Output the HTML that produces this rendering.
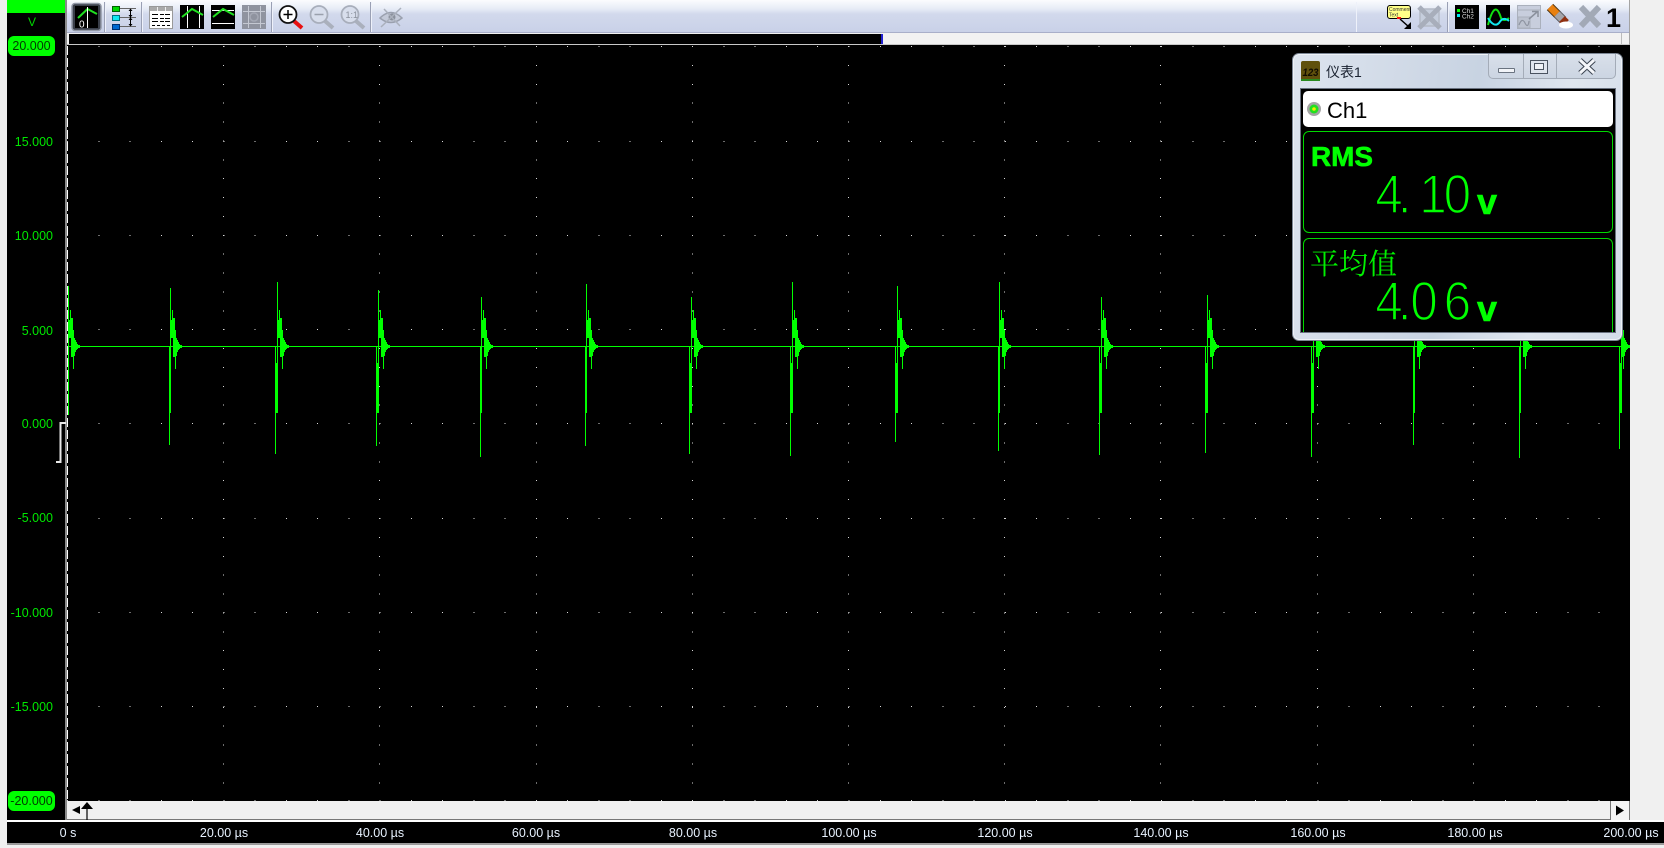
<!DOCTYPE html>
<html lang="zh">
<head>
<meta charset="utf-8">
<title>Scope</title>
<style>
html,body{margin:0;padding:0;background:#f0f0f0}
#p{position:relative;width:1664px;height:848px;overflow:hidden;background:#f0f0f0;font-family:"Liberation Sans","Noto Sans CJK SC",sans-serif}
#p div{position:absolute;box-sizing:border-box}
.yl{left:7px;width:46px;text-align:right;font-size:12.5px;line-height:16px;height:16px;color:#00e800}
.pill{left:8px;width:47px;height:20px;background:#00ff00;border-radius:6px;color:#003a00;font-size:12.5px;line-height:20px;text-align:center}
.tl{width:100px;text-align:center;font-size:12.5px;line-height:16px;height:16px;top:825px;color:#e8f2ff}
svg{position:absolute;left:0;top:0}
</style>
</head>
<body>
<div id="p">
<!-- left axis column -->
<div style="left:7px;top:0;width:58px;height:820px;background:#000"></div>
<div style="left:7px;top:0;width:58px;height:13px;background:#00ff00"></div>
<div style="left:7px;top:15px;width:50px;text-align:center;color:#00d800;font-size:12px;line-height:14px">V</div>
<div style="left:65px;top:0;width:2px;height:821px;background:#8a8a8a"></div>
<!-- plot -->
<div style="left:67px;top:44px;width:1563px;height:757px;background:#000;border-top:1px solid #c8c8c8"></div>
<!-- toolbar -->
<div style="left:67px;top:0;width:1563px;height:33px;background:linear-gradient(#fbfcfe 0,#e6ebf6 9px,#d2d9ec 14px,#c9d1e8 100%);border-bottom:1px solid #a9afc9"></div>
<div style="left:67px;top:33px;width:1563px;height:11px;background:#f2f2f2"></div>
<div style="left:69px;top:34px;width:814px;height:10px;background:#000;border-right:2px solid #2020d0"></div>
<div style="left:1621px;top:33px;width:1px;height:11px;background:#bbb"></div>
<div style="left:1629px;top:0;width:1px;height:45px;background:#a4a4a4"></div>
<!-- scrollbar -->
<div style="left:67px;top:801px;width:1563px;height:19px;background:#f0f0f0;border-bottom:1px solid #777"></div>
<div style="left:1610px;top:801px;width:20px;height:19px;background:#f4f4f4;border-left:1px solid #777;border-right:1px solid #777"></div>
<!-- bottom axis -->
<div style="left:7px;top:820px;width:1657px;height:2px;background:#fff"></div>
<div style="left:7px;top:822px;width:1657px;height:21px;background:#000"></div>
<div style="left:7px;top:843px;width:1657px;height:2px;background:#9a9a9a"></div>

<div class="pill" style="top:36px">20.000</div>
<div class="yl" style="top:134px">15.000</div>
<div class="yl" style="top:228px">10.000</div>
<div class="yl" style="top:323px">5.000</div>
<div class="yl" style="top:416px">0.000</div>
<div class="yl" style="top:510px">-5.000</div>
<div class="yl" style="top:605px">-10.000</div>
<div class="yl" style="top:699px">-15.000</div>
<div class="pill" style="top:791px">-20.000</div>

<div class="tl" style="left:18px">0 s</div>
<div class="tl" style="left:174px">20.00 µs</div>
<div class="tl" style="left:330px">40.00 µs</div>
<div class="tl" style="left:486px">60.00 µs</div>
<div class="tl" style="left:643px">80.00 µs</div>
<div class="tl" style="left:799px">100.00 µs</div>
<div class="tl" style="left:955px">120.00 µs</div>
<div class="tl" style="left:1111px">140.00 µs</div>
<div class="tl" style="left:1268px">160.00 µs</div>
<div class="tl" style="left:1425px">180.00 µs</div>
<div class="tl" style="left:1581px">200.00 µs</div>

<svg width="1664" height="848" viewBox="0 0 1664 848">
<defs>
<path id="r" d="M1 320h1v18h-1zM2 310h1v28h-1zM3 318h2v39h-2zM5 330h1v39h-1zM6 338h1v18h-1zM7 340h1v12h-1zM8 342h1v8h-1zM9 344h1v5h-1zM10 345h2v3h-2z" fill="#00ff00"/>
</defs>
<!-- grid dots -->
<g stroke="#d8d8d8" stroke-width="1" shape-rendering="crispEdges" fill="none">
<g stroke-dasharray="1 30.26">
<path d="M67 46.5H1630"/><path d="M67 141.5H1630"/><path d="M67 235.5H1630"/><path d="M67 329.5H1630"/><path d="M67 423.5H1630"/><path d="M67 518.5H1630"/><path d="M67 612.5H1630"/><path d="M67 706.5H1630"/><path d="M67 800.5H1630"/>
</g>
<g stroke-dasharray="1 17.88">
<path d="M223.5 46V801"/><path d="M379.5 46V801"/><path d="M536.5 46V801"/><path d="M692.5 46V801"/><path d="M848.5 46V801"/><path d="M1004.5 46V801"/><path d="M1160.5 46V801"/><path d="M1317.5 46V801"/><path d="M1473.5 46V801"/>
</g>
</g>
<!-- dashed cursor line -->
<path d="M67.5 46V801" stroke="#fff" stroke-dasharray="9 3" fill="none" shape-rendering="crispEdges"/>
<!-- trace -->
<g shape-rendering="crispEdges">
<path d="M68 346.5H1630" stroke="#00ff00" stroke-width="1" fill="none"/>
<path fill="none" stroke="#00ff00" stroke-width="1" d="M68.5 286V415M170.5 288V413M169.5 346V445M277.5 282V413M276.5 363V413M275.5 346V454M378.5 290V413M377.5 363V413M376.5 346V446M481.5 297V413M480.5 346V457M586.5 284V413M585.5 346V446M691.5 297V413M690.5 363V413M689.5 346V454M792.5 282V413M791.5 363V413M790.5 346V456M897.5 286V413M896.5 363V413M895.5 346V442M999.5 282V413M998.5 346V451M1101.5 297V413M1100.5 363V413M1099.5 346V455M1207.5 295V413M1206.5 363V413M1205.5 346V453M1313.5 295V413M1312.5 363V413M1311.5 346V457M1414.5 290V413M1413.5 346V445M1520.5 290V413M1519.5 346V458M1621.5 290V413M1620.5 363V413M1619.5 346V449"/>
<use href="#r" x="68"/><use href="#r" x="170"/><use href="#r" x="277"/><use href="#r" x="378"/><use href="#r" x="481"/><use href="#r" x="586"/><use href="#r" x="691"/><use href="#r" x="792"/><use href="#r" x="897"/><use href="#r" x="999"/><use href="#r" x="1101"/><use href="#r" x="1207"/><use href="#r" x="1313"/><use href="#r" x="1414"/><use href="#r" x="1520"/><use href="#r" x="1618"/>
</g>
<!-- ground bracket -->
<path d="M66 423H60.500V462H56" stroke="#e8e8e8" stroke-width="2" fill="none"/>
<!-- scroll arrows -->
<path d="M72 810l8-4v8z" fill="#000"/>
<path d="M87 820V806" stroke="#000" stroke-width="1.2"/>
<path d="M81 809l6-7 6 7z" fill="#000"/>
<path d="M1616 805.500l8 5-8 5z" fill="#000"/>

<!-- toolbar separators -->
<g stroke="#9aa0b4" stroke-width="1" shape-rendering="crispEdges">
<path d="M104.5 2V32M141.5 2V32M271.5 2V32M370.5 2V32M1447.5 2V32"/>
</g>
<g stroke="#eef1fa" stroke-width="1" shape-rendering="crispEdges"><path d="M105.5 2V32M142.5 2V32M272.5 2V32M371.5 2V32M1448.5 2V32M1356.5 2V32"/></g>

<!-- icon 1 -->
<rect x="72" y="3.5" width="29" height="27" rx="3" fill="#3a3f4a" stroke="#9298a6" stroke-width="1.5"/>
<rect x="75" y="6" width="23" height="22" fill="#000"/>
<path d="M78 18L87.5 9L97 14" stroke="#20e020" stroke-width="2" fill="none"/>
<path d="M87.5 7V28" stroke="#fff"/>
<text x="79" y="27.500" font-size="10" fill="#fff" font-family="Liberation Sans">0</text>
<!-- icon 2 -->
<g shape-rendering="crispEdges">
<path d="M120 8.500H136M120 17.500H136M120 26.500H136" stroke="#666"/>
<rect x="112.500" y="6.500" width="7" height="5" fill="#00d800" stroke="#006000"/>
<rect x="112.500" y="15.500" width="7" height="5" fill="#10e8f0" stroke="#007080"/>
<rect x="112.500" y="24.500" width="7" height="5" fill="#0068d0" stroke="#003070"/>
<path d="M130.500 10V25" stroke="#000"/>
</g>
<path d="M128.500 11l2-2.500 2 2.500zM128.500 15l2 2.500 2-2.500zM128.500 20l2-2.500 2 2.500zM128.500 24l2 2.500 2-2.500z" fill="#000"/>
<!-- icon 3 table -->
<g shape-rendering="crispEdges">
<rect x="149.500" y="6.500" width="23" height="22" fill="#fff" stroke="#999"/>
<rect x="150" y="7" width="22" height="4" fill="#aaa"/>
<path d="M157.500 7V11M165.500 7V11" stroke="#eee"/>
<path d="M152 14.500h6m2 0h4m1 0h5M152 18.500h6m2 0h4m1 0h5M152 21.500h6m2 0h4m1 0h5M152 25.500h3m2 0h3m2 0h3m2 0h3" stroke="#000"/>
</g>
<!-- icon 4 -->
<rect x="180" y="5" width="24" height="24" fill="#000"/>
<path d="M187.500 6V28M199.500 6V28" stroke="#fff" shape-rendering="crispEdges"/>
<path d="M182 17L192 9L203 15" stroke="#20e020" stroke-width="2" fill="none"/>
<!-- icon 5 -->
<rect x="211" y="5" width="24" height="24" fill="#000"/>
<path d="M212 10.500H234M212 23.500H234" stroke="#fff" shape-rendering="crispEdges"/>
<path d="M213 17L223 9L234 15" stroke="#20e020" stroke-width="2" fill="none"/>
<!-- icon 6 -->
<rect x="242" y="5" width="24" height="24" fill="#8f939f"/>
<path d="M248.500 6V28M260.500 6V28M243 11.500H265M243 23.500H265" stroke="#c4c8d2" shape-rendering="crispEdges"/>
<circle cx="254" cy="17" r="4" fill="none" stroke="#a4a8b4" stroke-width="1.500"/>
<!-- zoom in -->
<path d="M294 21L302 28" stroke="#e81010" stroke-width="4"/>
<circle cx="288" cy="14.500" r="8.500" fill="#fff" stroke="#111" stroke-width="1.800"/>
<path d="M283.500 14.500h9M288 10v9" stroke="#000" stroke-width="1.500"/>
<!-- zoom out -->
<path d="M325 21L333 28" stroke="#aab0bc" stroke-width="4"/>
<circle cx="319" cy="14.500" r="8.500" fill="#d8deec" stroke="#a8aebb" stroke-width="1.800"/>
<path d="M314.500 14.500h9" stroke="#9aa0ac" stroke-width="1.500"/>
<!-- zoom 1:1 -->
<path d="M356 21L364 28" stroke="#aab0bc" stroke-width="4"/>
<circle cx="350" cy="14.500" r="8.500" fill="#d8deec" stroke="#a8aebb" stroke-width="1.800"/>
<text x="345.500" y="18" font-size="9" fill="#8a909c" font-family="Liberation Sans">1:1</text>
<!-- eye -->
<path d="M380 18Q391 7 402 18Q391 27 380 18Z" fill="#c3c9d8" stroke="#9aa0ae" stroke-width="1.500"/>
<circle cx="392" cy="17" r="3.500" fill="#8a909c"/>
<path d="M381 27L401 8M384 9L400 26" stroke="#aab0bc" stroke-width="1.500" fill="none"/>

<!-- comment icon -->
<rect x="1387.500" y="5.500" width="23" height="13" rx="2.500" fill="#ffff88" stroke="#000"/>
<text x="1389" y="11" font-size="5" fill="#333" font-family="Liberation Sans">Comment</text>
<text x="1389" y="16.500" font-size="5" fill="#333" font-family="Liberation Sans">Text</text>
<rect x="1397" y="17" width="4" height="2" fill="#ff1010"/>
<path d="M1400 19L1409 27" stroke="#000" stroke-width="1.500"/>
<path d="M1411 29V22L1404 29Z" fill="#000"/>
<!-- disabled X box -->
<rect x="1420" y="9" width="19" height="17" rx="2" fill="#c6cedd" stroke="#b4bac6" stroke-width="1.500"/>
<path d="M1419 7L1440 28M1440 7L1419 28" stroke="#a8aebb" stroke-width="5"/>
<!-- Ch1/Ch2 -->
<rect x="1455" y="5" width="24" height="24" fill="#000"/>
<rect x="1457" y="9" width="3" height="3" fill="#00ff00"/>
<rect x="1457" y="14" width="3" height="3" fill="#00e8f0"/>
<text x="1462" y="13" font-size="6.500" fill="#ddd" font-family="Liberation Sans">Ch1</text>
<text x="1462" y="18.500" font-size="6.500" fill="#ddd" font-family="Liberation Sans">Ch2</text>
<!-- wave -->
<rect x="1486" y="5" width="24" height="24" fill="#000"/>
<path d="M1488 25Q1495 -2 1501 18Q1504 22 1509 18" stroke="#10e010" stroke-width="2" fill="none"/>
<path d="M1488 18Q1494 28 1499 23Q1503 16 1509 21" stroke="#10e8f0" stroke-width="2" fill="none"/>
<!-- popup disabled -->
<rect x="1517.500" y="5.500" width="23" height="23" fill="#c8cedd" stroke="#aab0bc"/>
<path d="M1518 10H1540" stroke="#aab0bc"/>
<rect x="1518" y="17" width="12" height="11" fill="#bcc2cf" stroke="#aab0bc"/>
<path d="M1519 25Q1522 17 1525 23T1529 21" stroke="#8f95a2" fill="none" stroke-width="1.200"/>
<path d="M1529 19L1537 12M1532 11.500H1538V17" stroke="#8a909c" stroke-width="1.500" fill="none"/>
<!-- eraser -->
<path d="M1550 7L1558 15" stroke="#4a3010" stroke-width="9"/>
<path d="M1550 7L1558 15" stroke="#e88010" stroke-width="7"/>
<path d="M1557 14L1563 20" stroke="#5a5a60" stroke-width="9"/>
<path d="M1557 14L1563 20" stroke="#a4a4aa" stroke-width="7"/>
<path d="M1562 19L1566 23" stroke="#903010" stroke-width="8"/>
<ellipse cx="1566" cy="25" rx="7" ry="3.500" fill="#fff"/>
<!-- big X -->
<path d="M1581 7L1599 26M1599 7L1581 26" stroke="#a2a9b6" stroke-width="6"/>
<text x="1606" y="27" font-size="27" font-weight="bold" fill="#000" font-family="Liberation Sans">1</text>
</svg>

<!-- meter panel -->
<div style="left:1292px;top:53px;width:331px;height:288px;border-radius:7px;border:1px solid #7c8694;background:linear-gradient(100deg,#dde4ee 0,#c8d3e2 50%,#dfe6ef 75%,#d3dce8 100%);box-shadow:inset 0 0 0 1px #eef2f7"></div>
<div style="left:1488px;top:54px;width:128px;height:25px;border:1px solid #a4acb8;border-top:0;border-radius:0 0 5px 5px;background:linear-gradient(#d9e0ea,#ccd5e2)"></div>
<div style="left:1523px;top:54px;width:1px;height:24px;background:#a4acb8"></div>
<div style="left:1556px;top:54px;width:1px;height:24px;background:#a4acb8"></div>
<div style="left:1498px;top:68px;width:17px;height:5px;background:#f2f4f8;border:1px solid #6a7380;border-radius:1px"></div>
<div style="left:1530px;top:60px;width:18px;height:14px;border:1px solid #4a5360;background:#dfe5ee"></div>
<div style="left:1534px;top:63px;width:10px;height:7px;border:1px solid #4a5360;background:#eef1f6"></div>
<svg width="1664" height="848" viewBox="0 0 1664 848">
<path d="M1580 60L1594 73M1594 60L1580 73" stroke="#3a4350" stroke-width="5"/>
<path d="M1580 60L1594 73M1594 60L1580 73" stroke="#f4f6fa" stroke-width="3"/>
<rect x="1301" y="61" width="19" height="20" rx="2" fill="#5f500c"/>
<rect x="1301" y="79" width="19" height="2" fill="#2a8a20"/>
<text x="1302.500" y="76" font-size="11" font-style="italic" font-weight="bold" fill="#100c00" font-family="Liberation Sans" textLength="16" lengthAdjust="spacingAndGlyphs">123</text>
</svg>
<div style="left:1326px;top:63px;font-size:14px;line-height:18px;color:#1a2230;white-space:nowrap">仪表1</div>
<div style="left:1300px;top:88px;width:316px;height:245px;background:#000;border:1px solid #6a7280;overflow:hidden">
  <div style="left:2px;top:2px;width:310px;height:36px;background:#fff;border-radius:5px"></div>
  <div style="left:2px;top:42px;width:310px;height:102px;border:1px solid #00d800;border-radius:6px"></div>
  <div style="left:2px;top:149px;width:310px;height:120px;border:1px solid #00d800;border-radius:6px"></div>
</div>
<svg width="1664" height="848" viewBox="0 0 1664 848">
<circle cx="1314" cy="109" r="7" fill="#a4a4a4"/>
<circle cx="1314" cy="109" r="4.500" fill="#20e020"/>
<circle cx="1314" cy="109" r="1.800" fill="#f0f000"/>
<text x="1327" y="118" font-size="22" fill="#000" font-family="Liberation Sans">Ch1</text>
<text x="1311" y="166" font-size="27.500" font-weight="bold" fill="#00ff00" stroke="#00ff00" stroke-width=".6" font-family="Liberation Sans" textLength="62" lengthAdjust="spacingAndGlyphs">RMS</text>
<g font-family="Liberation Sans" font-size="55" fill="#00ff00" stroke="#000" stroke-width="1.600">
<text transform="translate(1377,213) scale(.9,1)" x="-2 23 47 74">4.10</text>
<text transform="translate(1377,320) scale(.9,1)" x="-2 23 37 74">4.06</text>
</g>
<g font-family="Liberation Sans" font-size="36" font-weight="bold" fill="#00ff00" stroke="#00ff00" stroke-width=".6">
<text x="1477" y="214">v</text>
<text x="1477" y="321">v</text>
</g>
<text x="1310" y="274" font-size="29" fill="#00f000" font-family="Noto Serif CJK SC, Noto Sans CJK SC, serif">平均值</text>
</svg>
</div>
</body>
</html>
